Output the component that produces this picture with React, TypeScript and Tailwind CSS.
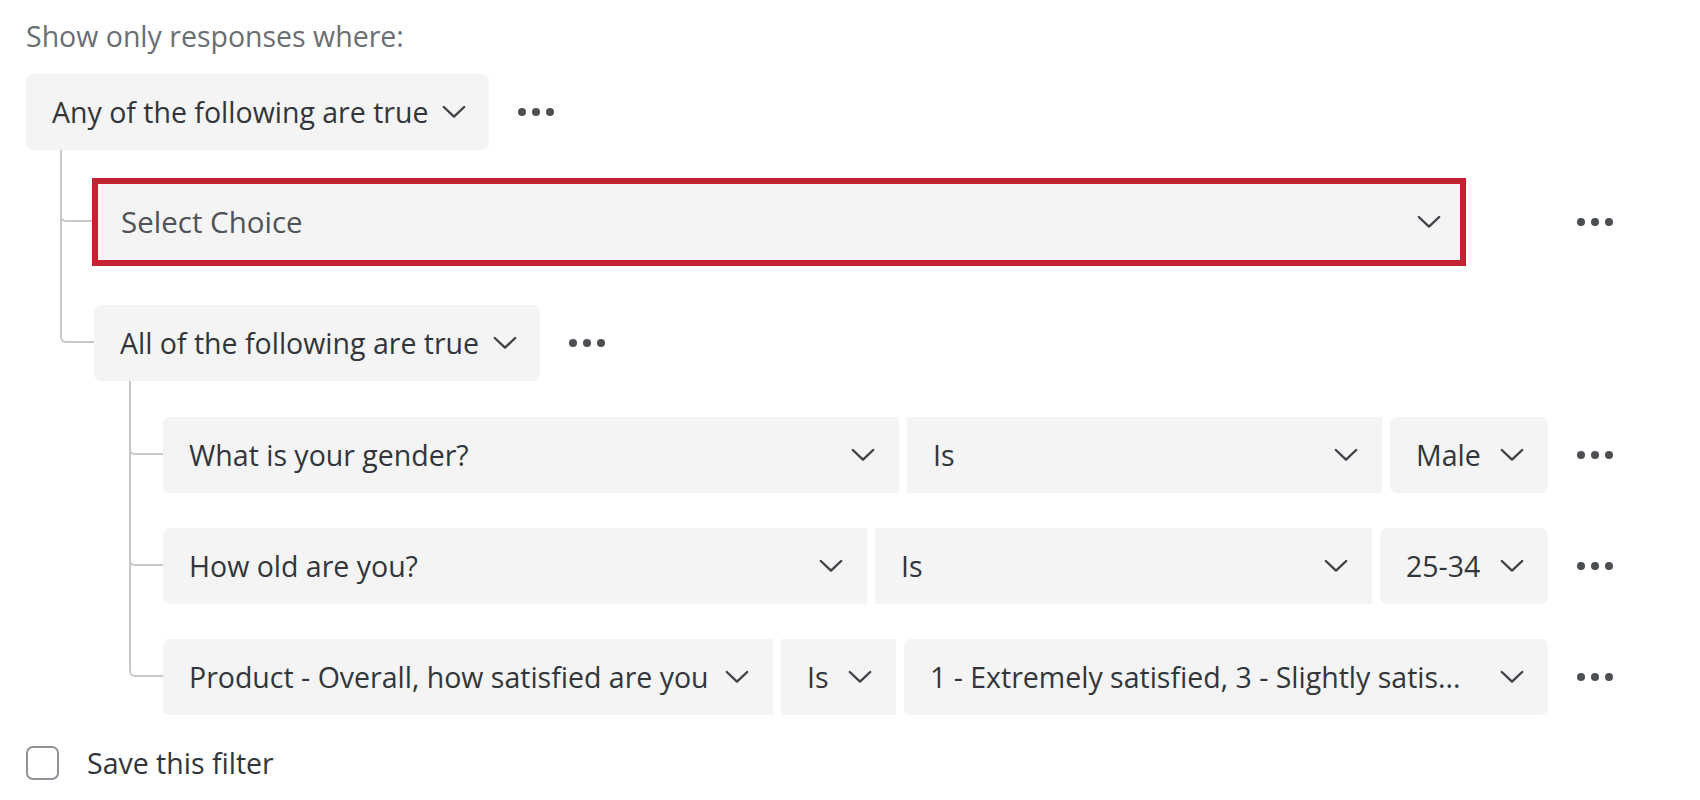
import React from "react";

const LINE = "border-[#c8c8c8]";

function Chevron({ color = "#3f4349" }: { color?: string }) {
  return (
    <svg width="24" height="14" viewBox="0 0 24 14" fill="none" className="shrink-0">
      <path d="M1.8 2 L12 11.6 L22.2 2" stroke={color} strokeWidth="2.4" strokeLinecap="round" strokeLinejoin="round" />
    </svg>
  );
}

function Dots({ className = "" }: { className?: string }) {
  return (
    <div className={"flex shrink-0 items-center gap-[6px] " + className}>
      <span className="h-2 w-2 rounded-full bg-[#4b4e53]" />
      <span className="h-2 w-2 rounded-full bg-[#4b4e53]" />
      <span className="h-2 w-2 rounded-full bg-[#4b4e53]" />
    </div>
  );
}

function Branch({
  topClass,
  padClass,
  last,
  children,
}: {
  topClass: string;
  padClass: string;
  last?: boolean;
  children: React.ReactNode;
}) {
  return (
    <div className="flex">
      <div className="flex w-[34px] shrink-0 flex-col">
        <div className={"border-b-2 border-l-2 rounded-bl-[6px] " + LINE + " " + topClass} />
        {!last && <div className={"-mt-2 flex-1 border-l-2 " + LINE} />}
      </div>
      <div className={padClass}>{children}</div>
    </div>
  );
}

function GroupHeader({ label }: { label: string }) {
  return (
    <div className="flex items-center">
      <div className="flex h-[76px] items-center gap-[14px] rounded-[7px] bg-[#f4f4f4] pl-[26px] pr-[23px] text-[#32363a]">
        <span>{label}</span>
        <Chevron />
      </div>
      <Dots className="ml-[29px]" />
    </div>
  );
}

function Field({
  label,
  widthClass,
  roundClass,
}: {
  label: string;
  widthClass: string;
  roundClass: string;
}) {
  return (
    <div
      className={
        "flex h-[76px] shrink-0 items-center justify-between gap-3 overflow-hidden bg-[#f4f4f4] pl-[26px] pr-[24px] text-[#32363a] " +
        widthClass +
        " " +
        roundClass
      }
    >
      <span className="overflow-hidden whitespace-nowrap">{label}</span>
      <Chevron />
    </div>
  );
}

function ConditionRow({
  a,
  b,
  c,
}: {
  a: [string, string];
  b: [string, string];
  c: [string, string];
}) {
  return (
    <div className="flex items-center">
      <div className="flex gap-[8px]">
        <Field label={a[0]} widthClass={a[1]} roundClass="rounded-l-[7px]" />
        <Field label={b[0]} widthClass={b[1]} roundClass="" />
        <Field label={c[0]} widthClass={c[1]} roundClass="rounded-[7px]" />
      </div>
      <Dots className="ml-[29px]" />
    </div>
  );
}

export default function App() {
  return (
    <div className="min-h-[800px] w-[1700px] bg-white pl-[26px] pt-[17px] font-['Open_Sans',sans-serif] text-[28.5px] leading-[38px]">
      <div className="text-[#6b6e73]">Show only responses where:</div>

      <div className="mt-[19px]">
        <GroupHeader label="Any of the following are true" />
        <div className="ml-[34px]">
          <Branch topClass="h-[72px]" padClass="pt-[28px]">
            <div className="-ml-[2px] flex items-center">
              <div className="flex h-[88px] w-[1374px] items-center justify-between border-[6px] border-[#c42232] bg-[#f4f4f4] pl-[23px] pr-[19px] text-[29.5px] text-[#4f5257]">
                <span>Select Choice</span>
                <Chevron />
              </div>
              <Dots className="ml-[111px]" />
            </div>
          </Branch>
          <Branch topClass="h-[77px]" padClass="pt-[39px]" last>
            <GroupHeader label="All of the following are true" />
            <div className="ml-[35px]">
              <Branch topClass="h-[74px]" padClass="pt-[36px]">
                <ConditionRow
                  a={["What is your gender?", "w-[736px]"]}
                  b={["Is", "w-[475px]"]}
                  c={["Male", "w-[158px]"]}
                />
              </Branch>
              <Branch topClass="h-[73px]" padClass="pt-[35px]">
                <ConditionRow
                  a={["How old are you?", "w-[704px]"]}
                  b={["Is", "w-[497px]"]}
                  c={["25-34", "w-[168px]"]}
                />
              </Branch>
              <Branch topClass="h-[73px]" padClass="pt-[35px]" last>
                <ConditionRow
                  a={["Product - Overall, how satisfied are you", "w-[610px]"]}
                  b={["Is", "w-[115px]"]}
                  c={["1 - Extremely satisfied, 3 - Slightly satis...", "w-[644px]"]}
                />
              </Branch>
            </div>
          </Branch>
        </div>
      </div>

      <label className="mt-[29px] flex items-center gap-[28px] text-[#32363a]">
        <span className="h-[34px] w-[33px] shrink-0 rounded-[7px] border-2 border-[#8e9399] bg-white" />
        <span>Save this filter</span>
      </label>
    </div>
  );
}
